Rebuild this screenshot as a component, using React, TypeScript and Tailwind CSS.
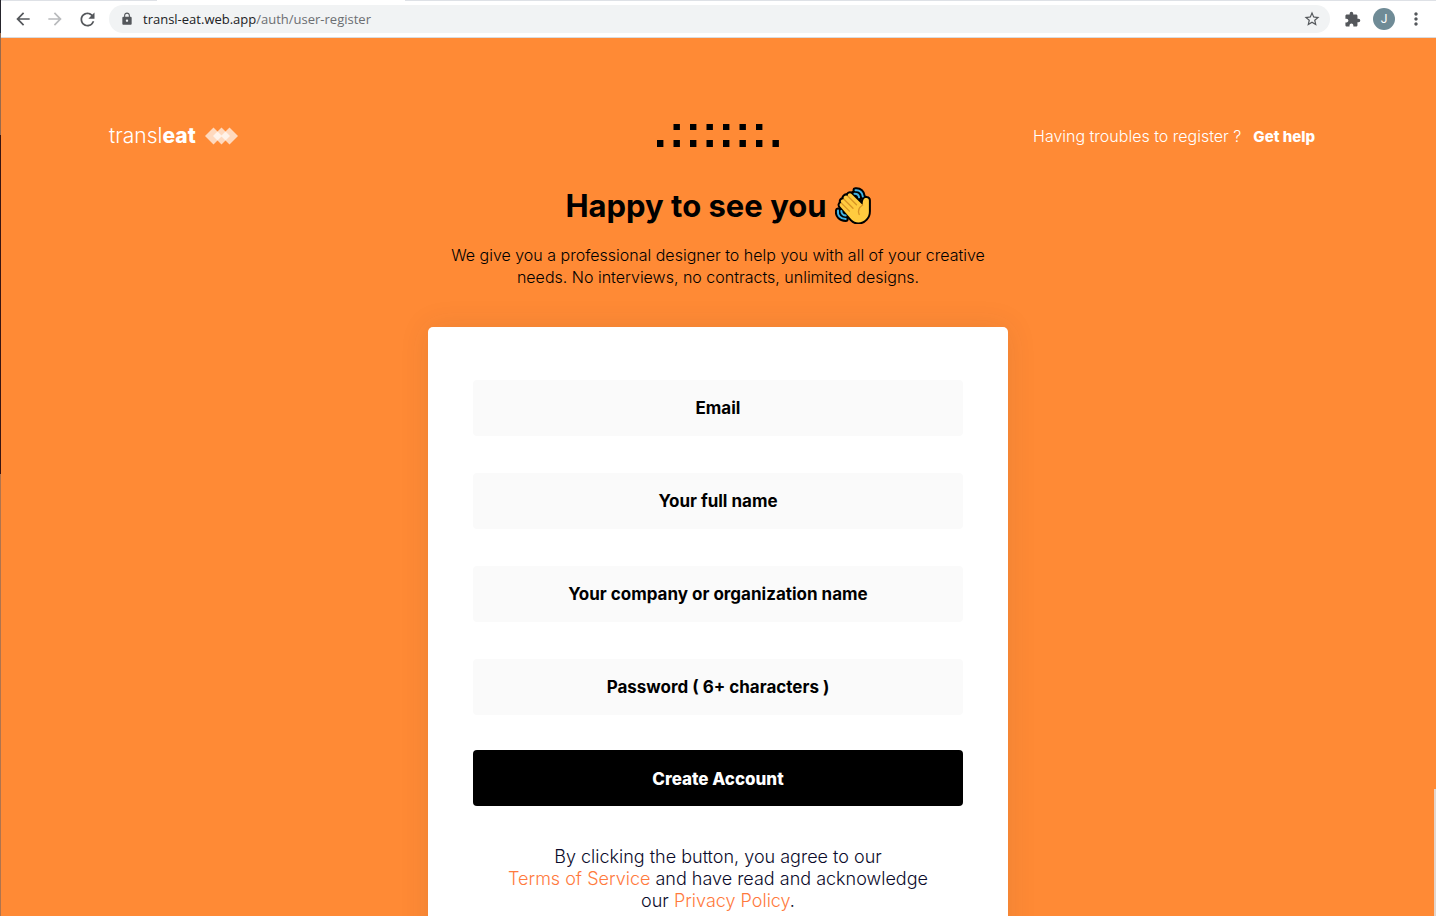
import type { ReactNode } from "react";
import { MdArrowBack, MdArrowForward, MdRefresh, MdLock, MdStarBorder, MdExtension, MdMoreVert } from "react-icons/md";

function BrowserButton({ label, children, className = "text-[#54575b]" }: { label: string; children: ReactNode; className?: string }) {
  return (
    <button type="button" aria-label={label} className={`flex w-8 items-center justify-center ${className}`}>
      {children}
    </button>
  );
}

function BrowserBar() {
  return (
    <header className="shrink-0 border-b border-[#d9dbde] bg-white">
      <div className="flex h-px">
        <div className="w-[157px] bg-[#dee1e6]" />
        <div className="w-[248px] bg-white" />
        <div className="flex-1 bg-[#dee1e6]" />
      </div>
      <div className="flex h-9 items-center pl-[7px] pr-1">
        <BrowserButton label="Back"><MdArrowBack size={20} /></BrowserButton>
        <BrowserButton label="Forward" className="text-[#b9bbbd]"><MdArrowForward size={20} /></BrowserButton>
        <BrowserButton label="Reload"><MdRefresh size={21} /></BrowserButton>
        <div className="ml-[6px] flex h-7 flex-1 items-center rounded-full bg-[#f1f3f4] pl-[11px] pr-[9px]">
          <MdLock size={14} className="text-[#54575b]" />
          <p className="ml-[9px] flex-1 font-['Open_Sans',sans-serif] text-[13px] leading-5 text-[#6b6e72]">
            <span className="text-[#202124]">transl-eat.web.app</span>/auth/user-register
          </p>
          <button type="button" aria-label="Bookmark this page" className="text-[#54575b]">
            <MdStarBorder size={18} />
          </button>
        </div>
        <BrowserButton label="Extensions" className="ml-[6px] text-[#54575b]"><MdExtension size={17} /></BrowserButton>
        <button type="button" aria-label="Profile" className="mx-[5px] size-[22px] rounded-full bg-[#6f8b96] font-['Roboto',sans-serif] text-[12px] leading-[22px] text-white">
          J
        </button>
        <BrowserButton label="Menu"><MdMoreVert size={20} /></BrowserButton>
      </div>
    </header>
  );
}

function Logo() {
  return (
    <a href="#" className="flex items-center text-[21px] leading-6 font-light text-white">
      <span>transl<b className="font-extrabold">eat</b></span>
      <svg viewBox="0 0 33 18" className="ml-[9px] h-[18px] w-[33px]" fill="#fff" fillOpacity="0.68" aria-hidden="true">
        <path d="M8.500.5l8.500 8.500-8.500 8.500L0 9z" />
        <path d="M16.500.5L25 9l-8.500 8.500L8 9z" />
        <path d="M24.500.5L33 9l-8.500 8.500L16 9z" />
      </svg>
    </a>
  );
}

function Dots() {
  const top = [0, 1, 2, 3, 4, 5];
  const bottom = [0, 1, 2, 3, 4, 5, 6, 7];
  return (
    <svg viewBox="0 0 122 23" className="h-[23px] w-[122px]" aria-hidden="true">
      {top.map((i) => <rect key={i} x={16.5 + i * 16.5} y="0" width="6.4" height="6" />)}
      {bottom.map((i) => <rect key={i} x={i * 16.5} y="16" width="6.4" height="7" />)}
    </svg>
  );
}

function WavingHand() {
  return (
    <svg viewBox="0 0 36 37" className="h-[37px] w-[36px]" role="img" aria-label="Waving hand" strokeLinecap="round" strokeLinejoin="round">
      <g fill="none" stroke="#000" strokeWidth="6">
        <path d="M20.500 3.200c4.200-.5 7 2.300 7.300 6.300M18.800 6.700c2.800-.3 5 1.500 5.200 4.300" />
        <path d="M3 23.500c-.8 5 2.500 8.400 7.700 8.500M6.500 22.800c-.3 3.400 1.800 5.400 5 5.400" />
      </g>
      <path d="M31.500 11c-2.700-.8-4 2.600-3.800 7L16.500 7c-1.800-1.700-4.500.2-3.500 2.300-2.400-2.200-5.500.3-4 3-2.300-.8-4.200 1.500-2.600 3.800-2 .2-2.400 2.200-1 3.700l11.100 12.700c4.200 4.600 10.800 3.600 14.500-.5 2.400-2.600 3-5 2.900-8.500V13.500c0-1.400-.9-2.200-2.400-2.500z" fill="#ffcb3f" stroke="#000" strokeWidth="4" />
      <path d="M31.500 11c-2.700-.8-4 2.600-3.800 7L16.500 7c-1.800-1.700-4.500.2-3.500 2.300-2.400-2.200-5.500.3-4 3-2.300-.8-4.200 1.500-2.600 3.800-2 .2-2.400 2.200-1 3.700l11.100 12.700c4.200 4.600 10.800 3.600 14.500-.5 2.400-2.600 3-5 2.900-8.500V13.500c0-1.400-.9-2.200-2.400-2.500z" fill="#ffcb3f" />
      <g fill="none" stroke="#41b4e6" strokeWidth="2">
        <path d="M20.500 3.200c4.200-.5 7 2.300 7.300 6.300M19.500 6.700c2.500-.1 4.200 1.300 4.600 3.600" />
        <path d="M3 23.500c-.8 5 2.500 8.400 7.700 8.500M6.300 24c.2 2.600 1.700 4.200 4.300 4.600" />
      </g>
      <path d="M13 9.300l8.500 8.500M9 12.300l9 9M6.400 16.100l8 8M27.700 18c-4.300 2.700-5 6-3.500 9.500" fill="none" stroke="#d89425" strokeWidth="1.300" />
    </svg>
  );
}

const fields = [
  { id: "email", type: "email", label: "Email" },
  { id: "name", type: "text", label: "Your full name" },
  { id: "company", type: "text", label: "Your company or organization name" },
  { id: "password", type: "password", label: "Password ( 6+ characters )" },
];

export default function App() {
  return (
    <div className="relative flex h-screen flex-col overflow-hidden bg-[#ff8a35] font-[Inter,sans-serif]">
      <BrowserBar />
      <main className="min-h-0 flex-1 overflow-y-auto px-[109px] pt-[86px] [scrollbar-width:none]">
        <div className="grid grid-cols-[1fr_auto_1fr] items-start">
          <Logo />
          <Dots />
          <p className="mr-3 text-right text-[16px] leading-6 font-light text-white">
            Having troubles to register ?<a href="#" className="ml-3 text-[15px] font-extrabold">Get help</a>
          </p>
        </div>
        <section className="mx-auto mt-[38px] max-w-[580px] text-center">
          <h1 className="flex items-center justify-center gap-2 text-[31px] leading-9 font-bold text-black">
            Happy to see you <WavingHand />
          </h1>
          <p className="mx-auto mt-5 max-w-[560px] text-[16px] leading-[22px] font-light text-black">
            We give you a professional designer to help you with all of your creative<br />
            needs. No interviews, no contracts, unlimited designs.
          </p>
          <form className="mt-[39px] rounded-[5px] bg-white px-[45px] pt-[53px] pb-12 shadow-[0_0_30px_rgba(60,60,60,0.1)]" onSubmit={(e) => e.preventDefault()}>
            <div className="flex flex-col gap-[37px]">
              {fields.map((f) => (
                <input
                  key={f.id}
                  id={f.id}
                  type={f.type}
                  aria-label={f.label}
                  placeholder={f.label}
                  className="h-14 w-full rounded-[4px] bg-[#fafafa] text-center text-[17px] font-bold text-black outline-none placeholder:text-black placeholder:opacity-100"
                />
              ))}
            </div>
            <button type="submit" className="mt-[35px] h-14 w-full rounded-[4px] bg-black pt-1 text-[17px] font-extrabold text-white">
              Create Account
            </button>
            <p className="mt-10 text-[18px] leading-[22px] font-light text-[#0b0b2b]">
              By clicking the button, you agree to our<br />
              <a href="#" className="text-[#ff7a3d]">Terms of Service</a> and have read and acknowledge<br />
              our <a href="#" className="text-[#ff7a3d]">Privacy Policy</a>.
            </p>
          </form>
        </section>
      </main>
      <div className="absolute top-[789px] right-0 bottom-0 w-[2px] bg-[#e3d5cb]" />
      <div className="absolute inset-y-0 left-0 flex w-px flex-col">
        <div className="h-[33px] bg-[#25242c]" />
        <div className="h-[102px] bg-[#9a6a4c]" />
        <div className="h-[339px] bg-[#3a1410]" />
        <div className="flex-1 bg-[#b0744e]" />
      </div>
    </div>
  );
}
